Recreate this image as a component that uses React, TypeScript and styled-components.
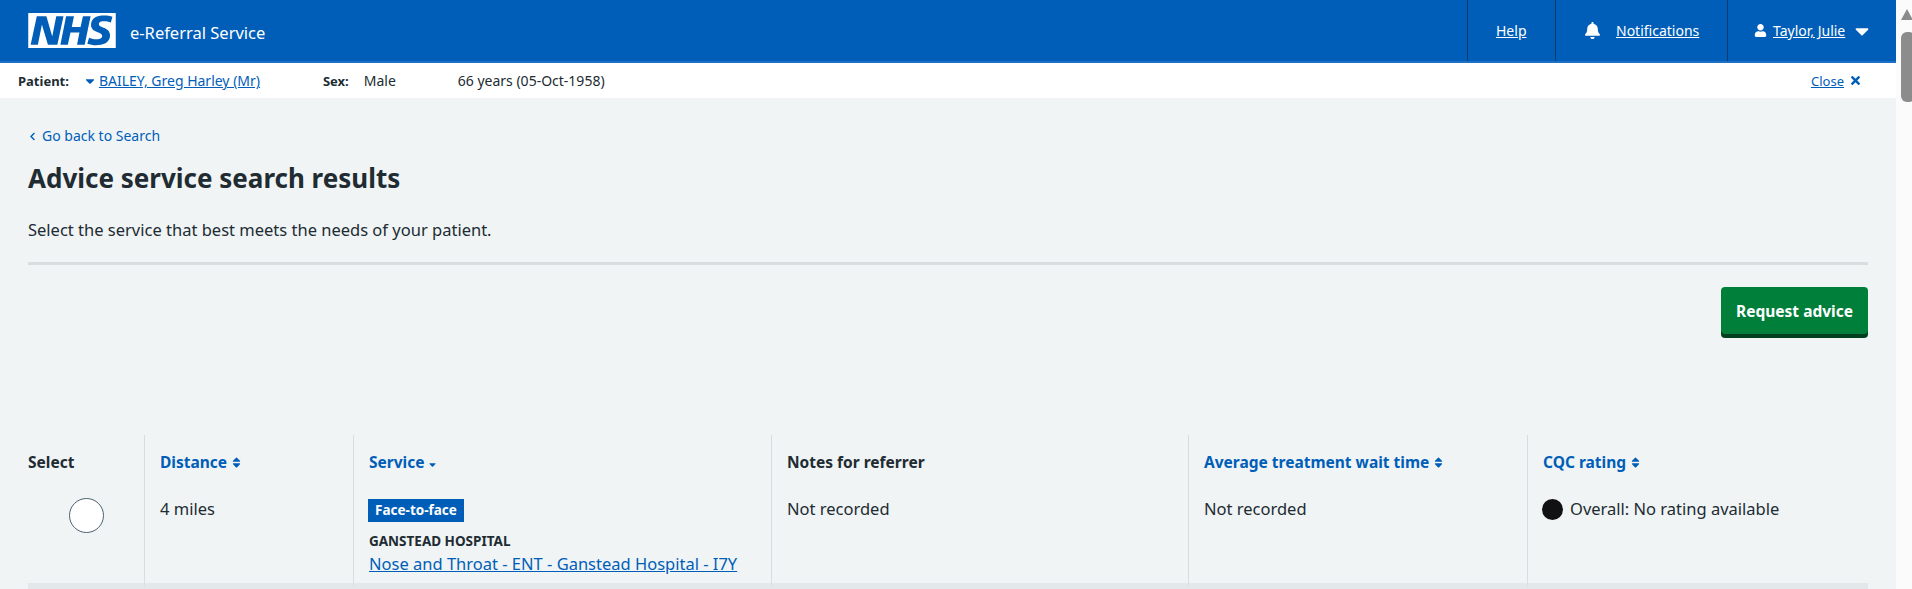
import React from 'react';
import styled, { createGlobalStyle } from 'styled-components';
import { FaBell, FaUser, FaTimes, FaCaretDown, FaSort, FaSortDown, FaChevronLeft } from 'react-icons/fa';

const GlobalStyle = createGlobalStyle`
  html, body {
    margin: 0;
    height: 100%;
    overflow: hidden;
  }
  body {
    font-family: "Noto Sans", "Open Sans", Arial, sans-serif;
    font-size: 16.5px;
    color: #212b32;
    background: #f0f4f5;
  }
`;

const Shell = styled.div`
  display: flex;
  height: 589px;
  overflow: hidden;
`;

const Page = styled.div`
  flex: 1;
  min-width: 0;
`;

const ScrollTrack = styled.div`
  width: 16px;
  flex: none;
  background: #fbfbfb;
  overflow: hidden;
  padding-left: 5px;
  box-sizing: border-box;
`;

const ScrollArrow = styled.div`
  width: 0;
  height: 0;
  margin-top: 9px;
  border-left: 6px solid transparent;
  border-right: 6px solid transparent;
  border-bottom: 11px solid #8c8c8c;
`;

const ScrollThumb = styled.div`
  width: 14px;
  height: 70px;
  margin-top: 12px;
  border-radius: 6px;
  background: #8c8c8c;
`;

const Header = styled.header`
  height: 63px;
  box-sizing: border-box;
  background: #005eb8;
  border-bottom: 2px solid #1d70c4;
  display: flex;
  align-items: stretch;
  color: #fff;
`;

const Brand = styled.div`
  flex: 1;
  display: flex;
  align-items: center;
  gap: 14px;
  padding-left: 28px;
  font-size: 16.5px;
`;

const BrandName = styled.span`
  margin-top: 3px;
`;

const NavItem = styled.div<{ $width: number; $gap?: number; $pad?: number }>`
  width: ${p => p.$width}px;
  box-sizing: border-box;
  border-left: 1px solid #0b3a66;
  display: flex;
  align-items: center;
  font-size: 14px;
  padding-left: ${p => p.$pad ?? 28}px;
  gap: ${p => p.$gap ?? 15}px;
`;

const NavLink = styled.a`
  color: #fff;
  text-decoration: underline;
`;

const PatientBar = styled.div`
  height: 35px;
  background: #fff;
  display: flex;
  align-items: center;
  padding-left: 18px;
  padding-right: 34px;
  font-size: 14px;
`;

const BarLabel = styled.span`
  font-weight: 700;
  font-size: 13px;
`;

const BarLink = styled.a`
  color: #005eb8;
  text-decoration: underline;
`;

const PatientLink = styled.span`
  display: flex;
  align-items: center;
  gap: 2px;
  margin-left: 14px;
  width: 240px;
  color: #005eb8;
`;

const BarText = styled.span<{ $width: number; $gap: number }>`
  width: ${p => p.$width}px;
  margin-left: ${p => p.$gap}px;
`;

const CloseLink = styled.span`
  margin-left: auto;
  display: flex;
  align-items: center;
  gap: 5px;
  font-size: 13px;
  color: #005eb8;
`;

const Main = styled.main`
  padding: 28px 28px 0;
`;

const BackLink = styled.a`
  display: flex;
  align-items: center;
  gap: 5px;
  font-size: 14px;
  line-height: 20px;
  color: #005eb8;
`;

const Title = styled.h1`
  margin: 14px 0 0;
  font-size: 26px;
  line-height: 36px;
  font-weight: 700;
`;

const Intro = styled.p`
  margin: 22px 0 0;
  line-height: 24px;
`;

const Rule = styled.hr`
  margin: 20px 0 0;
  border: 0;
  height: 3px;
  background: #d8dde0;
`;

const Actions = styled.div`
  display: flex;
  justify-content: flex-end;
  margin-top: 22px;
`;

const PrimaryButton = styled.button`
  width: 147px;
  height: 47px;
  border: 0;
  border-radius: 4px;
  background: #007f3b;
  box-shadow: 0 4px 0 #00401e;
  color: #fff;
  font-family: inherit;
  font-size: 15.5px;
  font-weight: 700;
  padding: 0;
`;

const ResultsTable = styled.div`
  margin-top: 101px;
  display: grid;
  grid-template-columns: 116px 209px 418px 417px 339px 341px;
`;

const Cell = styled.div<{ $first?: boolean }>`
  height: 154px;
  box-sizing: border-box;
  padding: 15px 15px 0;
  border-left: ${p => (p.$first ? '0' : '1px solid #d8dde0')};
  padding-left: ${p => (p.$first ? '0' : '15px')};
  border-bottom: 6px solid #e3e8ea;
`;

const HeadLabel = styled.div`
  font-size: 15.5px;
  font-weight: 700;
  line-height: 24px;
  display: flex;
  align-items: center;
  gap: 3px;
`;

const SortLabel = styled(HeadLabel)`
  color: #005eb8;
`;

const CellBody = styled.div`
  margin-top: 23px;
  line-height: 24px;
`;

const Radio = styled.div`
  width: 35px;
  height: 35px;
  box-sizing: border-box;
  margin: 24px 0 0 41px;
  border: 1px solid #4c6272;
  border-radius: 50%;
  background: #fff;
`;

const Tag = styled.span`
  display: inline-block;
  box-sizing: border-box;
  width: 96px;
  height: 23px;
  line-height: 23px;
  text-align: center;
  margin: 2px 0 0 -1px;
  background: #005eb8;
  color: #fff;
  font-size: 13.5px;
  font-weight: 700;
  vertical-align: top;
`;

const Hospital = styled.div`
  margin-top: 9px;
  font-size: 13.5px;
  line-height: 20px;
  font-weight: 700;
`;

const ServiceLink = styled.a`
  display: block;
  margin-top: 1px;
  color: #005eb8;
  text-decoration: underline;
  white-space: nowrap;
`;

const Rating = styled.div`
  display: flex;
  align-items: center;
  gap: 7px;
`;

const Dot = styled.span`
  width: 21px;
  height: 21px;
  margin-left: -1px;
  border-radius: 50%;
  background: #111;
`;

const NhsLogo = () => (
  <svg width="88" height="35" viewBox="0 0 40 16" aria-label="NHS">
    <path fill="#fff" d="M0 0h40v16H0z" />
    <path
      fill="#005eb8"
      d="M3.9 1.5h4.4l2.6 9h.1l1.8-9h3.3l-2.8 13H9l-2.7-9h-.1l-1.8 9H1.1M17.3 1.5h3.6l-1 4.9h4L25 1.5h3.5l-2.7 13h-3.5l1.1-5.6h-4.1l-1.2 5.6h-3.4M37.7 4.4c-.7-.3-1.6-.6-2.9-.6-1.4 0-2.5.2-2.5 1.3 0 1.8 5.1 1.2 5.1 5.1 0 3.6-3.3 4.5-6.4 4.5-1.3 0-2.9-.3-4-.7l.8-2.7c.7.4 2.1.7 3.2.7s2.8-.2 2.8-1.5c0-2.1-5.1-1.3-5.1-5 0-3.4 2.9-4.4 5.8-4.4 1.6 0 3.1.2 4 .6"
    />
  </svg>
);

function App(): JSX.Element {
  return (
    <Shell>
      <GlobalStyle />
      <Page>
        <Header>
          <Brand>
            <NhsLogo />
            <BrandName>e-Referral Service</BrandName>
          </Brand>
          <NavItem $width={88}>
            <NavLink>Help</NavLink>
          </NavItem>
          <NavItem $width={172}>
            <FaBell size={17} />
            <NavLink>Notifications</NavLink>
          </NavItem>
          <NavItem $width={169} $gap={6} $pad={26}>
            <FaUser size={13} />
            <NavLink>Taylor, Julie</NavLink>
            <FaCaretDown size={22} />
          </NavItem>
        </Header>
        <PatientBar>
          <BarLabel>Patient:</BarLabel>
          <PatientLink>
            <FaCaretDown size={14} />
            <BarLink>BAILEY, Greg Harley (Mr)</BarLink>
          </PatientLink>
          <BarLabel>Sex:</BarLabel>
          <BarText $width={94} $gap={15}>Male</BarText>
          <span>66 years (05-Oct-1958)</span>
          <CloseLink>
            <BarLink>Close</BarLink>
            <FaTimes size={13} />
          </CloseLink>
        </PatientBar>
        <Main>
          <BackLink>
            <FaChevronLeft size={9} />
            Go back to Search
          </BackLink>
          <Title>Advice service search results</Title>
          <Intro>Select the service that best meets the needs of your patient.</Intro>
          <Rule />
          <Actions>
            <PrimaryButton>Request advice</PrimaryButton>
          </Actions>
          <ResultsTable>
            <Cell $first>
              <HeadLabel>Select</HeadLabel>
              <Radio />
            </Cell>
            <Cell>
              <SortLabel>Distance <FaSort size={13} /></SortLabel>
              <CellBody>4 miles</CellBody>
            </Cell>
            <Cell>
              <SortLabel>Service <FaSortDown size={11} /></SortLabel>
              <CellBody>
                <Tag>Face-to-face</Tag>
                <Hospital>GANSTEAD HOSPITAL</Hospital>
                <ServiceLink>Nose and Throat - ENT - Ganstead Hospital - I7Y</ServiceLink>
              </CellBody>
            </Cell>
            <Cell>
              <HeadLabel>Notes for referrer</HeadLabel>
              <CellBody>Not recorded</CellBody>
            </Cell>
            <Cell>
              <SortLabel>Average treatment wait time <FaSort size={13} /></SortLabel>
              <CellBody>Not recorded</CellBody>
            </Cell>
            <Cell>
              <SortLabel>CQC rating <FaSort size={13} /></SortLabel>
              <CellBody>
                <Rating>
                  <Dot />
                  Overall: No rating available
                </Rating>
              </CellBody>
            </Cell>
          </ResultsTable>
        </Main>
      </Page>
      <ScrollTrack>
        <ScrollArrow />
        <ScrollThumb />
      </ScrollTrack>
    </Shell>
  );
}

export default App;
